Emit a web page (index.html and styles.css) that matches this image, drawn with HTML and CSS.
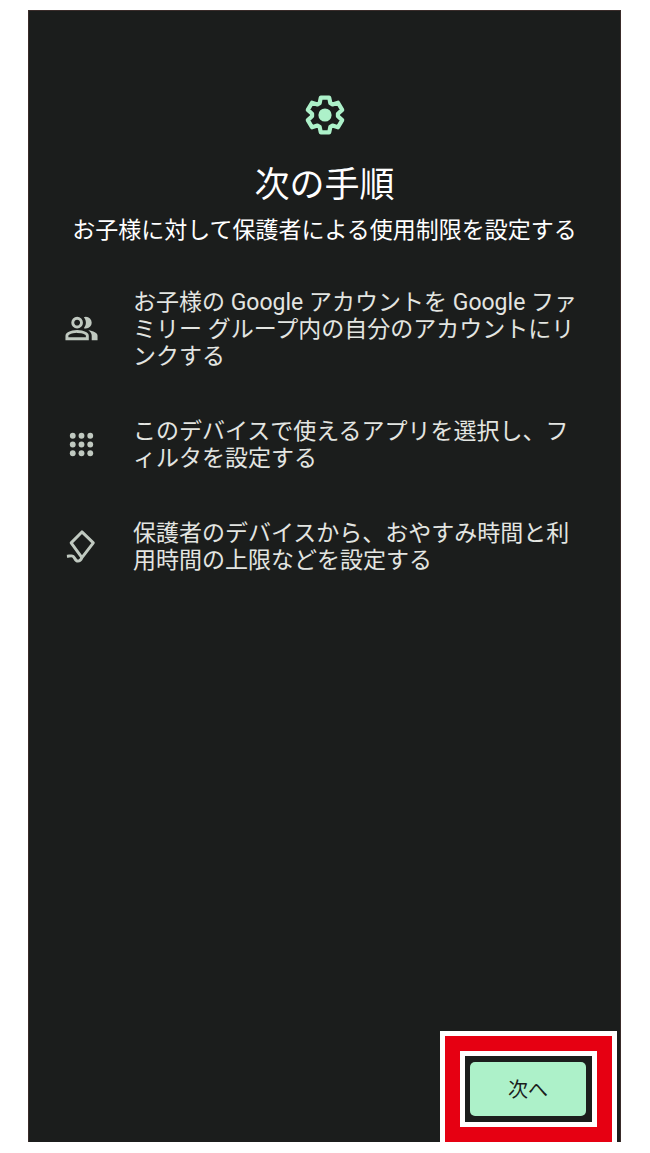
FILE: index.html
```html
<!DOCTYPE html>
<html lang="ja">
<head>
  <meta charset="UTF-8">
  <meta name="viewport" content="width=device-width, initial-scale=1.0">
  <title>次の手順</title>
  <link rel="stylesheet" href="styles.css">
</head>
<body>
  <main class="screen">
    <header class="header">
      <svg class="gear" viewBox="-12 -12 24 24" aria-hidden="true">
        <path d="M-2.7-5.9L-2.1-8.7L2.1-8.7L2.7-5.9L3.76-5.29L6.5-6.15L8.6-2.55L6.46-.61L6.46.61L8.6 2.55L6.5 6.15L3.76 5.29L2.7 5.9L2.1 8.7L-2.1 8.7L-2.7 5.9L-3.76 5.29L-6.5 6.15L-8.6 2.55L-6.46.61L-6.46-.61L-8.6-2.55L-6.5-6.15L-3.76-5.29Z" fill="none" stroke="currentColor" stroke-width="2.1" stroke-linejoin="round"/>
        <circle r="3.3" fill="currentColor"/>
      </svg>
      <h1>次の手順</h1>
      <p class="subtitle">お子様に対して保護者による使用制限を設定する</p>
    </header>

    <ul class="steps">
      <li class="step">
        <svg class="icon" viewBox="0 0 24 24" aria-hidden="true">
          <path fill="currentColor" d="M1 20v-2.8q0-.85.438-1.562T2.6 14.55q1.55-.775 3.15-1.162T9 13t3.25.388 3.15 1.162q.725.375 1.163 1.088T17 17.2V20zm18 0v-3q0-1.1-.612-2.113T16.65 13.15q1.275.15 2.4.513t2.1.887q.9.5 1.375 1.112T23 17v3zM9 12q-1.65 0-2.825-1.175T5 8t1.175-2.825T9 4t2.825 1.175T13 8t-1.175 2.825T9 12m10-4q0 1.65-1.175 2.825T15 12q-.275 0-.7-.062t-.7-.138q.675-.8 1.038-1.775T15 8t-.362-2.025T13.6 4.2q.35-.125.7-.163T15 4q1.65 0 2.825 1.175T19 8M3 18h12v-.8q0-.275-.137-.5t-.363-.35q-1.35-.675-2.725-1.012T9 15t-2.775.338T3.5 16.35q-.225.125-.363.35T3 17.2zm6-8q.825 0 1.413-.587T11 8t-.587-1.412T9 6t-1.412.588T7 8t.588 1.413T9 10"/>
        </svg>
        <p>お子様の Google アカウントを Google ファミリー グループ内の自分のアカウントにリンクする</p>
      </li>
      <li class="step">
        <svg class="icon" viewBox="0 0 24 24" fill="currentColor" aria-hidden="true">
          <circle cx="6" cy="6" r="2"/><circle cx="12" cy="6" r="2"/><circle cx="18" cy="6" r="2"/>
          <circle cx="6" cy="12" r="2"/><circle cx="12" cy="12" r="2"/><circle cx="18" cy="12" r="2"/>
          <circle cx="6" cy="18" r="2"/><circle cx="12" cy="18" r="2"/><circle cx="18" cy="18" r="2"/>
        </svg>
        <p>このデバイスで使えるアプリを選択し、フィルタを設定する</p>
      </li>
      <li class="step">
        <svg class="icon" viewBox="0 0 24 24" aria-hidden="true">
          <path d="M12.3 19.6L4.9 9.5L12.3 2L20.1 9.5L12.3 19.6C11.6 21.2 10.8 22 9.6 22C6.9 22 7.9 18.4 5.1 18.4C3.9 18.4 3.4 18.6 2 18.7" fill="none" stroke="currentColor" stroke-width="2" stroke-linejoin="round"/>
        </svg>
        <p>保護者のデバイスから、おやすみ時間と利用時間の上限などを設定する</p>
      </li>
    </ul>

    <footer class="footer">
      <!-- 操作するボタンを示す赤枠 -->
      <div class="highlight">
        <div class="highlight-inner">
          <button type="button" class="next-button">次へ</button>
        </div>
      </div>
    </footer>
  </main>
</body>
</html>
```
FILE: styles.css
```css
* {
  box-sizing: border-box;
}

body {
  display: flex;
  min-height: 100vh;
  margin: 0;
  padding: 10px 29px 11px 28px;
  background-color: #fff;
  font-family: Roboto, "Noto Sans CJK JP", sans-serif;
}

h1,
p,
ul {
  margin: 0;
  padding: 0;
}

.screen {
  display: flex;
  flex: 1;
  flex-direction: column;
  padding-top: 80px;
  border: 1px solid #3a2c2a;
  border-bottom: none;
  background-color: #1b1d1c;
  color: #fff;
}

.header {
  display: flex;
  flex-direction: column;
  align-items: center;
  text-align: center;
}

.gear {
  width: 48px;
  height: 48px;
  color: #adf1c9;
}

h1 {
  margin-top: 25px;
  font-size: 35px;
  font-weight: 400;
  line-height: 44px;
}

.subtitle {
  margin-top: 9px;
  font-size: 23px;
  line-height: 27px;
}

.steps {
  display: flex;
  flex-direction: column;
  gap: 46px;
  margin-top: 43px;
  padding: 0 36px 0 35px;
  list-style: none;
}

.step {
  display: flex;
  align-items: center;
  gap: 34px;
}

.step p {
  flex: 1;
  padding-top: 2px;
  color: #e3e5e1;
  font-size: 23px;
  line-height: 27px;
  line-break: loose;
}

.icon {
  flex: none;
  width: 35px;
  height: 35px;
  color: #c0c9c0;
}

.footer {
  display: flex;
  justify-content: flex-end;
  margin-top: auto;
  padding-right: 3px;
}

.highlight {
  padding: 15px;
  border: 5px solid #fff;
  border-bottom: none;
  background-color: #e60012;
}

.highlight-inner {
  padding: 6px 6px 6px 5px;
  border: 5px solid #fff;
  background-color: #1b1d1c;
}

.next-button {
  display: block;
  padding: 13px 38px 11px;
  border: none;
  border-radius: 5px;
  background-color: #adf1c9;
  color: #1b1d1c;
  font-family: inherit;
  font-size: 20px;
  line-height: 30px;
  cursor: pointer;
}
```
